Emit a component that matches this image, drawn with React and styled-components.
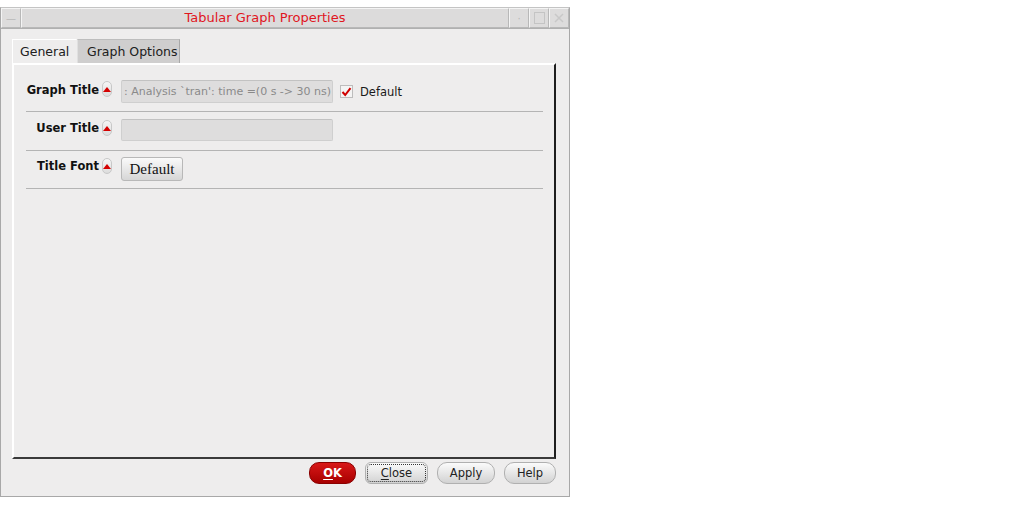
import React from "react";
import styled, { createGlobalStyle } from "styled-components";

const Global = createGlobalStyle`
  html, body { margin: 0; padding: 0; background: #ffffff; }
  body { font-family: "DejaVu Sans", "Liberation Sans", sans-serif; }
`;

const Page = styled.div`
  width: 1013px;
  height: 524px;
  padding-top: 7px;
  box-sizing: border-box;
`;

const Window = styled.div`
  width: 570px;
  height: 490px;
  box-sizing: border-box;
  border: 1px solid #a8a8a8;
  border-top-color: #c4c4c4;
  background: #eeeded;
  display: flex;
  flex-direction: column;
`;

const TitleBar = styled.div`
  height: 20px;
  display: flex;
  border-bottom: 1px solid #b0b0b0;
`;

const TitleButton = styled.div`
  width: 20px;
  flex: none;
  box-sizing: border-box;
  background: #dddcdc;
  border: 1px solid #f4f4f4;
  border-right-color: #b8b8b8;
  border-bottom-color: #b8b8b8;
  display: flex;
  align-items: center;
  justify-content: center;
  color: #b8b8b8;
  font-size: 10px;
`;

const Title = styled.div`
  flex: 1;
  box-sizing: border-box;
  background: #dcdbdb;
  border: 1px solid #f4f4f4;
  border-right-color: #b8b8b8;
  border-bottom-color: #b8b8b8;
  text-align: center;
  color: #e0161e;
  font-size: 13px;
  line-height: 18px;
`;

const Body = styled.div`
  flex: 1;
  display: flex;
  flex-direction: column;
  padding: 10px 13px 0 11px;
`;

const Tabs = styled.div`
  display: flex;
  height: 24px;
`;

const Tab = styled.div`
  box-sizing: border-box;
  height: 24px;
  line-height: 24px;
  font-size: 12.5px;
  white-space: nowrap;
  color: #202020;
  background: ${p => (p.$active ? "#eeeded" : "#cfcece")};
  border-top: 1px solid ${p => (p.$active ? "#ffffff" : "#bdbdbd")};
  border-left: 1px solid ${p => (p.$active ? "#ffffff" : "#e0e0e0")};
  border-right: 1px solid ${p => (p.$active ? "transparent" : "#a8a8a8")};
  ${p => (p.$active ? "width: 65px; padding-left: 7px;" : "width: 103px; padding-left: 9px;")}
`;

const Panel = styled.div`
  height: 396px;
  box-sizing: border-box;
  border-top: 2px solid #ffffff;
  border-left: 2px solid #ffffff;
  border-right: 2px solid #1e1e1e;
  border-bottom: 2px solid #3a3a3a;
  padding: 0 11px 0 12px;
`;

const Row = styled.div`
  display: grid;
  grid-template-columns: 75px 12px 1fr;
  align-items: start;
  height: ${p => p.$h}px;
  box-sizing: border-box;
  padding-top: ${p => p.$pt}px;
  border-bottom: 1px solid #b4b4b4;
`;

const Label = styled.div`
  text-align: right;
  font-weight: bold;
  font-size: 11.5px;
  color: #111;
  padding-right: 2px;
  padding-top: ${p => p.$pt}px;
`;

const Marker = styled.div`
  width: 10px;
  height: 16px;
  box-sizing: border-box;
  border: 1px solid #c8c8c8;
  border-radius: 5px;
  background: linear-gradient(#f6f6f6, #dcdcdc);
  display: flex;
  justify-content: center;
  padding-top: 5px;
  margin-left: 1px;
  margin-top: ${p => p.$mt}px;
`;

const Tri = styled.div`
  width: 0;
  height: 0;
  border-left: 4px solid transparent;
  border-right: 4px solid transparent;
  border-bottom: 5px solid #d40000;
`;

const Field = styled.div`
  display: flex;
  align-items: center;
  gap: 7px;
  padding-left: 8px;
`;

const Input = styled.div`
  width: 212px;
  height: ${p => p.$h}px;
  box-sizing: border-box;
  background: #dedddd;
  border: 1px solid #cfcfcf;
  border-top-color: #c2c2c2;
  border-radius: 2px;
  font-size: 11px;
  color: #8a8a8a;
  line-height: 21px;
  padding-left: 2px;
  white-space: nowrap;
  overflow: hidden;
`;

const Check = styled.div`
  width: 13px;
  height: 13px;
  box-sizing: border-box;
  border: 1px solid #bdbdbd;
  background: #f4f4f4;
  display: flex;
  align-items: center;
  justify-content: center;
`;

const CheckLabel = styled.span`
  font-size: 11.5px;
  color: #1a1a1a;
`;

const FontButton = styled.div`
  width: 62px;
  height: 24px;
  box-sizing: border-box;
  border: 1px solid #b8b8b8;
  border-radius: 3px;
  background: linear-gradient(#fafafa, #d6d6d6);
  font-family: "Liberation Serif", "DejaVu Serif", serif;
  font-size: 15px;
  color: #111;
  text-align: center;
  line-height: 22px;
`;

const Footer = styled.div`
  display: flex;
  justify-content: flex-end;
  align-items: center;
  gap: 9px;
  padding-top: 3px;
`;

const Btn = styled.div`
  height: 22px;
  width: ${p => p.$w}px;
  box-sizing: border-box;
  border-radius: 10px;
  font-size: 11.5px;
  line-height: 20px;
  text-align: center;
  ${p =>
    p.$primary
      ? `background: linear-gradient(#d81818, #a80000); color: #fff; font-weight: bold; border: 1px solid #8a0000;`
      : `background: linear-gradient(#fbfbfb, #d2d2d2); color: #222; border: 1px solid #b0b0b0;`}
  ${p => (p.$focus ? "outline: 1px dotted #333; outline-offset: -3px; border-radius: 6px;" : "")}
  u { text-decoration-thickness: 1px; text-underline-offset: 2px; }
`;

function MarkerIcon({ mt }) {
  return (
    <Marker $mt={mt}>
      <Tri />
    </Marker>
  );
}

export default function App() {
  return (
    <Page>
      <Global />
      <Window>
        <TitleBar>
          <TitleButton>—</TitleButton>
          <Title>Tabular Graph Properties</Title>
          <TitleButton>·</TitleButton>
          <TitleButton>
            <svg width="11" height="12" viewBox="0 0 11 12">
              <rect x="0.5" y="0.5" width="10" height="11" fill="none" stroke="#c4c4c4" />
            </svg>
          </TitleButton>
          <TitleButton>
            <svg width="10" height="10" viewBox="0 0 10 10">
              <path d="M1 1 L9 9 M9 1 L1 9" stroke="#c8c8c8" strokeWidth="1.5" />
            </svg>
          </TitleButton>
        </TitleBar>
        <Body>
          <Tabs>
            <Tab $active>General</Tab>
            <Tab>Graph Options</Tab>
          </Tabs>
          <Panel>
            <Row $h={47} $pt={15}>
              <Label $pt={3}>Graph Title</Label>
              <MarkerIcon mt={1} />
              <Field>
                <Input $h={23}>: Analysis `tran': time =(0 s -&gt; 30 ns)</Input>
                <Check>
                  <svg width="11" height="10" viewBox="0 0 11 10">
                    <path d="M1.5 5 L4.2 8 L9.5 1.2" fill="none" stroke="#d00000" strokeWidth="2" />
                  </svg>
                </Check>
                <CheckLabel>Default</CheckLabel>
              </Field>
            </Row>
            <Row $h={39} $pt={7}>
              <Label $pt={2}>User Title</Label>
              <MarkerIcon mt={1} />
              <Field>
                <Input $h={22} />
              </Field>
            </Row>
            <Row $h={38} $pt={6}>
              <Label $pt={2}>Title Font</Label>
              <MarkerIcon mt={1} />
              <Field>
                <FontButton>Default</FontButton>
              </Field>
            </Row>
          </Panel>
          <Footer>
            <Btn $primary $w={47}>
              <u>O</u>K
            </Btn>
            <Btn $w={63} $focus>
              <u>C</u>lose
            </Btn>
            <Btn $w={58}>Apply</Btn>
            <Btn $w={52}>Help</Btn>
          </Footer>
        </Body>
      </Window>
    </Page>
  );
}
